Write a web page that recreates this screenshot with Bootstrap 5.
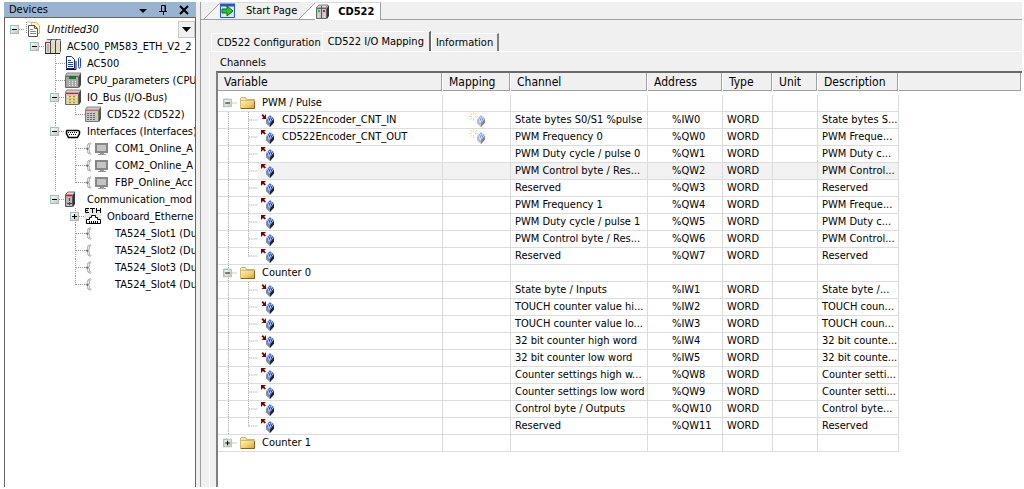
<!DOCTYPE html>
<html lang="en">
<head>
<meta charset="utf-8">
<meta name="viewport" content="width=device-width, initial-scale=1">
<title>CD522</title>
<link href="https://cdn.jsdelivr.net/npm/bootstrap@5.3.0/dist/css/bootstrap.min.css" rel="stylesheet">
<style>
body{font-family:"DejaVu Sans Condensed","DejaVu Sans",sans-serif;font-stretch:condensed;font-size:11px;line-height:16px;color:#000;background:#fff;padding:2px 2px 2px 4px}
button{padding:0;border:0;background:none;color:inherit}
svg{display:block;flex:none}
.face{background:#f0f0f0}
.devices{width:192px;flex:none}
.devices-head{height:15px;line-height:13px;background:#99b4d1;padding-left:5px}
.devices-body{background:#fff;border-left:1px solid #646464;border-right:1px solid #646464;border-top:1px solid #646464;padding-top:3px}
.tree-row{height:17px;display:flex;align-items:center;white-space:nowrap}
.g{width:20px;height:17px;flex:none}
.ico{width:22px;height:17px;flex:none}
.ico-wide{width:30px;height:17px;flex:none}
.drop{width:17px;height:17px;background:#f0f0f0;border:1px solid #c8c8c8}
.editor{border-left:1px solid #a0a0a0;margin-left:4px;min-width:0}
.doc-tabs{height:18px;border-bottom:1px solid #a0a0a0;padding-left:3px}
.doc-tab{height:17px;border-top:1px solid #d8d8d8;line-height:16px;padding-right:2px}
.doc-tab.active{background:#fff;height:18px;border-right:1px solid #a0a0a0;padding-right:6px}
.slant{width:16px;height:17px}
.inner-tabs{padding:11px 0 0 10px}
.inner-tab{height:18px;border:1px solid #fff;border-right:0;border-bottom:0;padding:0 1px 0 5px}
.inner-tab.active{height:20px;line-height:17px;border-right:2px solid #696969;padding:0 5px}
.inner-tab.last-tab{border-right:2px solid #808080;padding:0 4px}
.pane{border-top:1px solid #fff;border-left:1px solid #fff;margin-left:8px;padding-left:6px;min-height:0}
.channels{height:19px;line-height:21px;padding-left:4px}
.grid-frame{background:#fff;border-top:2px solid #696969;border-left:2px solid #808080;overflow:hidden}
.map{width:100%;table-layout:fixed;border-collapse:separate;border-spacing:0;line-height:16px}
.map th{height:22px;line-height:18px;font-weight:400;font-size:12px;background:#f0f0f0;background-clip:padding-box;padding:0 0 0 6px;border-right:1px solid #fff;border-bottom:4px solid #fff;box-shadow:inset -1px -1px #a0a0a0;white-space:nowrap}
.map td{height:17px;padding:0 0 0 4px;border-right:1px solid #dcdcdc;border-bottom:1px solid #dcdcdc;white-space:nowrap}
.map td:first-child{padding:0}
.map td:nth-child(4){padding-left:24px}
.map .cellrow{display:flex;height:16px}
.map .g,.map .pic{height:16px}
.pic{width:24px;flex:none}
.picked td{background:#f2f2f2}
.picked td:first-child{background:#fff}
.picked .flex-fill{background:#f2f2f2}
</style>
</head>
<body class="vh-100 d-flex overflow-hidden">
<svg width="0" height="0" class="position-absolute" aria-hidden="true">
<defs>
<linearGradient id="box" x1="0" y1="0" x2="1" y2="1"><stop offset="0" stop-color="#fff"/><stop offset="1" stop-color="#c4c4b8"/></linearGradient>
<linearGradient id="gold" x1="0" y1="0" x2="1" y2="1"><stop offset="0" stop-color="#fff2b8"/><stop offset=".55" stop-color="#f3cf70"/><stop offset="1" stop-color="#e09a20"/></linearGradient>
</defs>
<symbol id="bar" viewBox="0 0 20 17"><path d="M10.5 0v17" stroke="#999" stroke-dasharray="1 1"/></symbol>
<symbol id="tee" viewBox="0 0 20 17"><path d="M10.5 0v17M11 8.500h9" stroke="#999" stroke-dasharray="1 1"/></symbol>
<symbol id="ell" viewBox="0 0 20 17"><path d="M10.5 0v9M11 8.500h9" stroke="#999" stroke-dasharray="1 1" fill="none"/></symbol>
<symbol id="minus" viewBox="0 0 20 17"><path d="M14 8.500h6" stroke="#999" stroke-dasharray="1 1"/><rect x="5.500" y="4.500" width="8" height="8" fill="url(#box)" stroke="#b4b8b4"/><path d="M5.500 13V4.500H10" stroke="#8cc4c4" fill="none"/><path d="M7 8.500h5" stroke="#000"/></symbol>
<symbol id="plus" viewBox="0 0 20 17"><use href="#minus"/><path d="M9.500 6v5" stroke="#000"/></symbol>
<symbol id="folder" viewBox="0 0 24 16"><path d="M2.500 13.500v-10l1-1h4l1 2h8v9z" fill="#f7e6a8" stroke="#c8b070"/><path d="M2.500 5.500h14v8h-14z" fill="url(#gold)" stroke="#d8b868"/><path d="M3 13.500h13.500V6" fill="none" stroke="#7e6430"/></symbol>
<symbol id="cube" viewBox="0 0 24 16"><path d="M12 3l4 3.500v4L12 15l-4-4V7z" fill="#8090b0"/><path d="M12 3l4 3.500-4 5L8 7.500z" fill="#a8c4f4"/><path d="M16 6.500v4L12 15v-3.500z" fill="#202028"/><path d="M8 7.500l4 4V15l-4-4z" fill="#7c8ca8"/><path d="M12 4v1M10 6h1M12 6h1M14 6h1M9 8h1M11 8h1M13 8h1M12 10h1M11 7h1M13 7h1" stroke="#1030e0" stroke-width="1.200"/></symbol>
<symbol id="in" viewBox="0 0 24 16"><use href="#cube"/><path d="M8 2v5H3.500l1.800-1.800L3.500 3.400 4.900 2l1.600 2z" fill="#800000"/></symbol>
<symbol id="out" viewBox="0 0 24 16"><use href="#cube"/><path d="M3 1h5L6.200 2.800 8 4.600 6.600 5.500 4.900 4 3 6z" fill="#800000"/></symbol>
<symbol id="new" viewBox="0 0 24 16"><g opacity=".55"><use href="#cube" x="2"/></g><path d="M6.500 0v3M6.500 6v3M2 4.500h3M8 4.500h3M3 1l2 2M10 1L8 3M3 8l2-2" stroke="#ece680"/></symbol>
<symbol id="pages" viewBox="0 0 22 17"><path d="M1.500 12v-11h7" fill="none" stroke="#888" stroke-dasharray="1 1"/><path d="M6.500 1.500h5l3 3v8h-8z" fill="#fff8b8" stroke="#d0bc60"/><path d="M3.500 4.500h6l3 3v8h-9z" fill="#fff" stroke="#555"/><path d="M9.500 4.500v3h3" fill="none" stroke="#555"/><path d="M5 8.500h3M5 10.500h6M5 12.500h6" stroke="#888"/></symbol>
<symbol id="plc" viewBox="0 0 22 17"><path d="M0 4l2-3h14l-1 3z" fill="#e0e0e0"/><path d="M2 1.500h14" stroke="#777"/><path d="M0 4h15v11H0z" fill="#dcdcdc"/><path d="M15 4l1-3v12l-1 2z" fill="#444"/><path d="M.5 4v11M5.500 3v12M10.500 3v12M5.500 3l1.500-2M10.500 3L12 1" stroke="#444"/><path d="M1 4.500h4" stroke="#e02020"/><path d="M3 6v8" stroke="#888"/><path d="M8 6v8M13 6v8" stroke="#e8e070" stroke-width="2" stroke-dasharray="2 1"/><path d="M0 15.500h15" stroke="#222"/></symbol>
<symbol id="app" viewBox="0 0 22 17"><path d="M1.500 1.500h5l3 3v9h-8z" fill="#fff" stroke="#1028a0"/><path d="M3 5.500h3M3 7.500h5M3 9.500h5M3 11.500h5" stroke="#2040c0"/><path d="M1 14.500h10V6" fill="none" stroke="#111"/><path d="M13.500 11V3.500q1-2 2 0v8q-1 4-2 0z" fill="#fff" stroke="#1840e0"/></symbol>
<symbol id="cpu" viewBox="0 0 22 17"><path d="M0 4l2-3h14l-2 3z" fill="#c0c0c0" stroke="#888"/><path d="M.5 4.500h13v11H.5z" fill="#a8a8a8" stroke="#666"/><path d="M14 4l2-3v12l-2 3z" fill="#444"/><path d="M4 4h7v3H4z" fill="#108020"/><path d="M4.500 9v5M7.500 9v5M10.500 9v5" stroke="#eee" stroke-dasharray="1 1"/></symbol>
<symbol id="iobus" viewBox="0 0 22 17"><path d="M0 4l2-3h14l-2 3z" fill="#ccc" stroke="#888"/><path d="M.5 4.500h13v11H.5z" fill="#c8c8c0" stroke="#666"/><path d="M14 4l2-3v12l-2 3z" fill="#444"/><path d="M1 4.500h12" stroke="#f01010"/><path d="M3 7v8M7 7v8M11 7v8" stroke="#f4ec40" stroke-width="2" stroke-dasharray="2 1"/><path d="M5 7v8M9 7v8" stroke="#d02020" stroke-dasharray="1 2"/></symbol>
<symbol id="module" viewBox="0 0 22 17"><path d="M0 4l2-3h14l-2 3z" fill="#ccc" stroke="#888"/><path d="M.5 4.500h13v11H.5z" fill="#c8c8c8" stroke="#777"/><path d="M14 4l2-3v12l-2 3z" fill="#555"/><path d="M1 4.500h12" stroke="#e06060"/><path d="M3 7v8M6 7v8M9 7v8" stroke="#666" stroke-width="2" stroke-dasharray="1 1"/><path d="M11.500 7v8" stroke="#e0d860" stroke-dasharray="1 1"/></symbol>
<symbol id="serial" viewBox="0 0 22 17"><path d="M2 7.500h11l1.500 1v2l-2 4h-9l-2-4v-2z" fill="#fff" stroke="#000" stroke-width="1.500"/><path d="M3 9.500h10M4 11.500h8" stroke="#000" stroke-dasharray="1 1"/></symbol>
<symbol id="socket" viewBox="0 0 30 17"><path d="M6 3L3.500 4.500v3L2 8.500l1.500 1v3L6 14" fill="none" stroke="#808080" stroke-width="2"/><path d="M6 3L3.500 4.500v3L2 8.500l1.500 1v3L6 14" fill="none" stroke="#fff" stroke-width=".8"/><path d="M2.500 8v2" stroke="#e04040"/></symbol>
<symbol id="monitor" viewBox="0 0 30 17"><use href="#socket"/><path d="M10 3h13v10H10z" fill="#888"/><path d="M12 5h9v6h-9z" fill="#c4c4c4"/><path d="M15 13h4v1h2v1h-8v-1h2z" fill="#999"/></symbol>
<symbol id="comm" viewBox="0 0 22 17"><path d="M0 4l3-3h7L8 4z" fill="#ddd" stroke="#777"/><path d="M.5 4.500h7v11h-7z" fill="#b8b8b8" stroke="#555"/><path d="M8 4l2-3v12l-2 3z" fill="#333"/><path d="M1 4.500h6" stroke="#f01010" stroke-width="1.500"/><path d="M4.500 7v3M2 12.500h5M4.500 11v3" stroke="#444"/></symbol>
<symbol id="eth" viewBox="0 0 22 17"><path d="M0 1h16v15H0z" fill="#e8e8e8"/><path d="M4 .5H.5v4H4M.5 2.500H3M5 .5h5M7.500 0v5M11.500 0v5M15.500 0v5M11 2.500h5" fill="none" stroke="#000"/><path d="M1.500 15.500v-4h3v-2h2v-2h4v2h2v2h3v4z" fill="#fff" stroke="#000"/><path d="M4.500 13v2M6.500 13v2M8.500 13v2M10.500 13v2M12.500 13v2" stroke="#000"/></symbol>
</svg>

<aside class="devices d-flex flex-column">
  <header class="devices-head d-flex align-items-center">
    <span class="me-auto">Devices</span>
    <button aria-label="Menu" class="me-2"><svg width="14" height="14"><path d="M3 6h8l-4 4z"/></svg></button>
    <button aria-label="Pin" class="me-2"><svg width="12" height="14"><path d="M3.500 8V2.500h4V8M7 3v5M1 8.500h8M5.500 8v4" fill="none" stroke="#000"/></svg></button>
    <button aria-label="Close" class="me-1"><svg width="14" height="14"><path d="M2 3l8 8M10 3l-8 8" stroke="#000" stroke-width="2"/></svg></button>
  </header>
  <div class="devices-body flex-fill overflow-hidden d-flex flex-column">
    <div class="tree-row"><button aria-label="Collapse"><svg class="g"><use href="#minus"/></svg></button><svg class="ico"><use href="#pages"/></svg><em>Untitled30</em><button class="drop ms-auto" aria-label="Choose device"><svg width="15" height="15"><path d="M3 5h9l-4.500 5z"/></svg></button></div>
    <div class="tree-row"><svg class="g"></svg><button aria-label="Collapse"><svg class="g"><use href="#minus"/></svg></button><svg class="ico"><use href="#plc"/></svg>AC500_PM583_ETH_V2_2</div>
    <div class="tree-row"><svg class="g"></svg><svg class="g"></svg><svg class="g"><use href="#tee"/></svg><svg class="ico"><use href="#app"/></svg>AC500</div>
    <div class="tree-row"><svg class="g"></svg><svg class="g"></svg><svg class="g"><use href="#tee"/></svg><svg class="ico"><use href="#cpu"/></svg>CPU_parameters (CPU</div>
    <div class="tree-row"><svg class="g"></svg><svg class="g"></svg><button aria-label="Collapse"><svg class="g"><use href="#bar"/><use href="#minus"/></svg></button><svg class="ico"><use href="#iobus"/></svg>IO_Bus (I/O-Bus)</div>
    <div class="tree-row"><svg class="g"></svg><svg class="g"></svg><svg class="g"><use href="#bar"/></svg><svg class="g"><use href="#ell"/></svg><svg class="ico"><use href="#module"/></svg>CD522 (CD522)</div>
    <div class="tree-row"><svg class="g"></svg><svg class="g"></svg><button aria-label="Collapse"><svg class="g"><use href="#bar"/><use href="#minus"/></svg></button><svg class="ico"><use href="#serial"/></svg>Interfaces (Interfaces)</div>
    <div class="tree-row"><svg class="g"></svg><svg class="g"></svg><svg class="g"><use href="#bar"/></svg><svg class="g"><use href="#tee"/></svg><svg class="ico-wide"><use href="#monitor"/></svg>COM1_Online_A</div>
    <div class="tree-row"><svg class="g"></svg><svg class="g"></svg><svg class="g"><use href="#bar"/></svg><svg class="g"><use href="#tee"/></svg><svg class="ico-wide"><use href="#monitor"/></svg>COM2_Online_A</div>
    <div class="tree-row"><svg class="g"></svg><svg class="g"></svg><svg class="g"><use href="#bar"/></svg><svg class="g"><use href="#ell"/></svg><svg class="ico-wide"><use href="#monitor"/></svg>FBP_Online_Acc</div>
    <div class="tree-row"><svg class="g"></svg><svg class="g"></svg><button aria-label="Collapse"><svg class="g"><use href="#minus"/></svg></button><svg class="ico"><use href="#comm"/></svg>Communication_mod</div>
    <div class="tree-row"><svg class="g"></svg><svg class="g"></svg><svg class="g"></svg><button aria-label="Expand"><svg class="g"><use href="#bar"/><use href="#plus"/></svg></button><svg class="ico"><use href="#eth"/></svg>Onboard_Etherne</div>
    <div class="tree-row"><svg class="g"></svg><svg class="g"></svg><svg class="g"></svg><svg class="g"><use href="#tee"/></svg><svg class="ico-wide"><use href="#socket"/></svg>TA524_Slot1 (Du</div>
    <div class="tree-row"><svg class="g"></svg><svg class="g"></svg><svg class="g"></svg><svg class="g"><use href="#tee"/></svg><svg class="ico-wide"><use href="#socket"/></svg>TA524_Slot2 (Du</div>
    <div class="tree-row"><svg class="g"></svg><svg class="g"></svg><svg class="g"></svg><svg class="g"><use href="#tee"/></svg><svg class="ico-wide"><use href="#socket"/></svg>TA524_Slot3 (Du</div>
    <div class="tree-row"><svg class="g"></svg><svg class="g"></svg><svg class="g"></svg><svg class="g"><use href="#ell"/></svg><svg class="ico-wide"><use href="#socket"/></svg>TA524_Slot4 (Du</div>
  </div>
</aside>

<div class="face flex-fill d-flex overflow-hidden">
<main class="editor flex-fill d-flex flex-column">
  <nav class="doc-tabs d-flex">
    <svg class="slant"><path d="M0 17L16 1v16z" fill="#f4f4f4"/><path d="M0 17L16 1" stroke="#a0a0a0"/></svg>
    <button class="doc-tab d-flex align-items-center"><svg width="26" height="16"><path d="M.5 1.500h14v13H.5z" fill="#d8e8f8" stroke="#2858c8"/><path d="M0 2h15" stroke="#2858c8" stroke-width="3"/><path d="M2 6h5V3l6 5-6 5v-3H2z" fill="#30c030" stroke="#107010"/></svg>Start Page</button>
    <svg class="slant"><path d="M0 17L16 1v16z" fill="#fff"/><path d="M0 17L16 1" stroke="#a0a0a0"/></svg>
    <button class="doc-tab active d-flex align-items-center fw-bold"><svg width="23" height="16"><path d="M1 4l3-3h9l-2 3z" fill="#ddd" stroke="#777"/><path d="M1.500 4.500h10v10h-10z" fill="#c8c8c8" stroke="#666"/><path d="M12 4l2-3v11l-2 3z" fill="#333"/><path d="M6.500 2v12" stroke="#555"/><path d="M3 6h2v2H3z" fill="#00d020"/><path d="M8 6h2v2H8z" fill="#e02020"/><path d="M3.500 10v4M9.500 10v4" stroke="#eee" stroke-dasharray="1 1"/></svg>CD522</button>
  </nav>
  <nav class="inner-tabs d-flex align-items-end">
    <button class="inner-tab">CD522 Configuration</button>
    <button class="inner-tab active">CD522 I/O Mapping</button>
    <button class="inner-tab last-tab">Information</button>
  </nav>
  <section class="pane flex-fill d-flex flex-column">
    <div class="channels">Channels</div>
    <div class="grid-frame flex-fill">
    <table class="map">
      <colgroup><col style="width:225px"><col style="width:68px"><col style="width:137px"><col style="width:75px"><col style="width:50px"><col style="width:45px"><col style="width:81px"><col></colgroup>
      <thead><tr><th>Variable</th><th>Mapping</th><th>Channel</th><th>Address</th><th>Type</th><th>Unit</th><th>Description</th><th></th></tr></thead>
      <tbody>
      <tr><td><div class="cellrow"><button aria-label="Collapse"><svg class="g"><use href="#minus"/></svg></button><svg class="pic"><use href="#folder"/></svg>PWM / Pulse</div></td><td></td><td></td><td></td><td></td><td></td><td></td></tr>
      <tr><td><div class="cellrow"><svg class="g"><use href="#bar"/></svg><svg class="g"><use href="#tee"/></svg><svg class="pic"><use href="#in"/></svg>CD522Encoder_CNT_IN</div></td><td><svg class="pic mx-auto" height="16"><use href="#new"/></svg></td><td>State bytes S0/S1 %pulse</td><td>%IW0</td><td>WORD</td><td></td><td>State bytes S...</td></tr>
      <tr><td><div class="cellrow"><svg class="g"><use href="#bar"/></svg><svg class="g"><use href="#tee"/></svg><svg class="pic"><use href="#out"/></svg>CD522Encoder_CNT_OUT</div></td><td><svg class="pic mx-auto" height="16"><use href="#new"/></svg></td><td>PWM Frequency 0</td><td>%QW0</td><td>WORD</td><td></td><td>PWM Freque...</td></tr>
      <tr><td><div class="cellrow"><svg class="g"><use href="#bar"/></svg><svg class="g"><use href="#tee"/></svg><svg class="pic"><use href="#out"/></svg></div></td><td></td><td>PWM Duty cycle / pulse 0</td><td>%QW1</td><td>WORD</td><td></td><td>PWM Duty c...</td></tr>
      <tr class="picked"><td><div class="cellrow"><svg class="g"><use href="#bar"/></svg><svg class="g"><use href="#tee"/></svg><div class="flex-fill"><svg class="pic"><use href="#out"/></svg></div></div></td><td></td><td>PWM Control byte / Res...</td><td>%QW2</td><td>WORD</td><td></td><td>PWM Control...</td></tr>
      <tr><td><div class="cellrow"><svg class="g"><use href="#bar"/></svg><svg class="g"><use href="#tee"/></svg><svg class="pic"><use href="#out"/></svg></div></td><td></td><td>Reserved</td><td>%QW3</td><td>WORD</td><td></td><td>Reserved</td></tr>
      <tr><td><div class="cellrow"><svg class="g"><use href="#bar"/></svg><svg class="g"><use href="#tee"/></svg><svg class="pic"><use href="#out"/></svg></div></td><td></td><td>PWM Frequency 1</td><td>%QW4</td><td>WORD</td><td></td><td>PWM Freque...</td></tr>
      <tr><td><div class="cellrow"><svg class="g"><use href="#bar"/></svg><svg class="g"><use href="#tee"/></svg><svg class="pic"><use href="#out"/></svg></div></td><td></td><td>PWM Duty cycle / pulse 1</td><td>%QW5</td><td>WORD</td><td></td><td>PWM Duty c...</td></tr>
      <tr><td><div class="cellrow"><svg class="g"><use href="#bar"/></svg><svg class="g"><use href="#tee"/></svg><svg class="pic"><use href="#out"/></svg></div></td><td></td><td>PWM Control byte / Res...</td><td>%QW6</td><td>WORD</td><td></td><td>PWM Control...</td></tr>
      <tr><td><div class="cellrow"><svg class="g"><use href="#bar"/></svg><svg class="g"><use href="#ell"/></svg><svg class="pic"><use href="#out"/></svg></div></td><td></td><td>Reserved</td><td>%QW7</td><td>WORD</td><td></td><td>Reserved</td></tr>
      <tr><td><div class="cellrow"><button aria-label="Collapse"><svg class="g"><use href="#bar"/><use href="#minus"/></svg></button><svg class="pic"><use href="#folder"/></svg>Counter 0</div></td><td></td><td></td><td></td><td></td><td></td><td></td></tr>
      <tr><td><div class="cellrow"><svg class="g"><use href="#bar"/></svg><svg class="g"><use href="#tee"/></svg><svg class="pic"><use href="#in"/></svg></div></td><td></td><td>State byte / Inputs</td><td>%IW1</td><td>WORD</td><td></td><td>State byte /...</td></tr>
      <tr><td><div class="cellrow"><svg class="g"><use href="#bar"/></svg><svg class="g"><use href="#tee"/></svg><svg class="pic"><use href="#in"/></svg></div></td><td></td><td>TOUCH counter value hi...</td><td>%IW2</td><td>WORD</td><td></td><td>TOUCH coun...</td></tr>
      <tr><td><div class="cellrow"><svg class="g"><use href="#bar"/></svg><svg class="g"><use href="#tee"/></svg><svg class="pic"><use href="#in"/></svg></div></td><td></td><td>TOUCH counter value lo...</td><td>%IW3</td><td>WORD</td><td></td><td>TOUCH coun...</td></tr>
      <tr><td><div class="cellrow"><svg class="g"><use href="#bar"/></svg><svg class="g"><use href="#tee"/></svg><svg class="pic"><use href="#in"/></svg></div></td><td></td><td>32 bit counter high word</td><td>%IW4</td><td>WORD</td><td></td><td>32 bit counte...</td></tr>
      <tr><td><div class="cellrow"><svg class="g"><use href="#bar"/></svg><svg class="g"><use href="#tee"/></svg><svg class="pic"><use href="#in"/></svg></div></td><td></td><td>32 bit counter low word</td><td>%IW5</td><td>WORD</td><td></td><td>32 bit counte...</td></tr>
      <tr><td><div class="cellrow"><svg class="g"><use href="#bar"/></svg><svg class="g"><use href="#tee"/></svg><svg class="pic"><use href="#out"/></svg></div></td><td></td><td>Counter settings high w...</td><td>%QW8</td><td>WORD</td><td></td><td>Counter setti...</td></tr>
      <tr><td><div class="cellrow"><svg class="g"><use href="#bar"/></svg><svg class="g"><use href="#tee"/></svg><svg class="pic"><use href="#out"/></svg></div></td><td></td><td>Counter settings low word</td><td>%QW9</td><td>WORD</td><td></td><td>Counter setti...</td></tr>
      <tr><td><div class="cellrow"><svg class="g"><use href="#bar"/></svg><svg class="g"><use href="#tee"/></svg><svg class="pic"><use href="#out"/></svg></div></td><td></td><td>Control byte / Outputs</td><td>%QW10</td><td>WORD</td><td></td><td>Control byte...</td></tr>
      <tr><td><div class="cellrow"><svg class="g"><use href="#bar"/></svg><svg class="g"><use href="#ell"/></svg><svg class="pic"><use href="#out"/></svg></div></td><td></td><td>Reserved</td><td>%QW11</td><td>WORD</td><td></td><td>Reserved</td></tr>
      <tr><td><div class="cellrow"><button aria-label="Expand"><svg class="g"><use href="#plus"/></svg></button><svg class="pic"><use href="#folder"/></svg>Counter 1</div></td><td></td><td></td><td></td><td></td><td></td><td></td></tr>
      </tbody>
    </table>
    </div>
  </section>
</main>
</div>
<script src="https://cdn.jsdelivr.net/npm/bootstrap@5.3.0/dist/js/bootstrap.bundle.min.js"></script>
</body>
</html>
